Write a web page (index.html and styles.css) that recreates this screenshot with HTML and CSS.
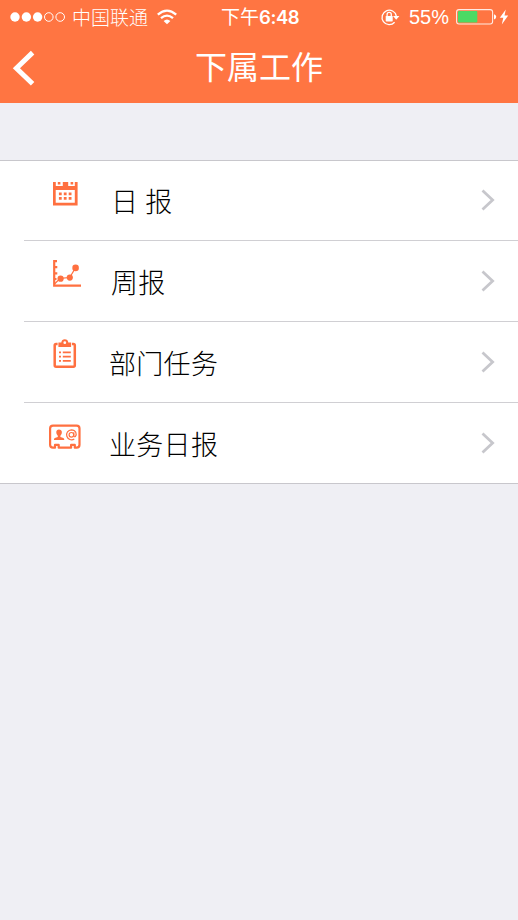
FILE: index.html
```html
<!DOCTYPE html>
<html lang="zh-CN">
<head>
<meta charset="utf-8">
<title>下属工作</title>
<link rel="stylesheet" href="styles.css">
</head>
<body>
<header class="header">
  <div class="status">
    <div class="carrier">
      <svg class="signal" width="56" height="12" viewBox="0 0 56 12"><g fill="#fff"><circle cx="5" cy="6" r="4.7"/><circle cx="16.4" cy="6" r="4.7"/><circle cx="27.6" cy="6" r="4.7"/></g><g fill="none" stroke="#fff" stroke-width="1"><circle cx="38.8" cy="6" r="4.3"/><circle cx="50.2" cy="6" r="4.3"/></g></svg>
      <span class="operator">中国联通</span>
      <svg class="wifi" width="20" height="16" viewBox="0 0 20 16"><g fill="none" stroke="#fff" stroke-width="2.3"><path d="M.8 5.6Q10-2.4 19.2 5.6"/><path d="M4 9.2Q10 4 16 9.2"/></g><path d="M6.6 12Q10 9 13.4 12L10 15.2Z" fill="#fff"/></svg>
    </div>
    <div class="time">下午<b>6:48</b></div>
    <div class="power">
      <svg class="lock" width="20" height="18" viewBox="0 0 20 18"><path d="M14.6 14.2A7.200 7.200 0 1 1 16.300 8" fill="none" stroke="#fff" stroke-width="1.3"/><path d="M13 8h6.400l-3.200 3.800z" fill="#fff"/><rect x="5.700" y="8" width="7" height="5.400" rx=".6" fill="#fff"/><path d="M7.100 8.200V6.400a2.100 2.100 0 0 1 4.200 0v1.800" fill="none" stroke="#fff" stroke-width="1.3"/></svg>
      <span class="percent">55%</span>
      <svg class="battery" width="54" height="18" viewBox="0 0 54 18"><rect x=".6" y="1.6" width="36" height="14.4" rx="2.4" fill="none" stroke="#fff" stroke-opacity=".85" stroke-width="1.1"/><rect x="2" y="3" width="19.3" height="11.6" rx="1" fill="#4cd964"/><path d="M38 6.2q2.2.5 2.2 2.6T38 11.4z" fill="#fff"/><path d="M49.8 1.400L43.800 9.700h3.500l-1.500 6.700 6.400-8.900h-3.700z" fill="#fff"/></svg>
    </div>
  </div>
  <nav class="navbar">
    <svg class="back" width="24" height="38" viewBox="0 0 24 38"><path d="M20.6 3.6L4.4 19.2 20.6 34.8" fill="none" stroke="#fff" stroke-width="5"/></svg>
    <h1 class="title">下属工作</h1>
  </nav>
</header>
<main class="list">
  <a class="row">
    <svg class="icon" viewBox="0 0 40 40"><path fill="#ff7040" fill-rule="evenodd" d="M8 8h2.800v4h7V8h5.400v4h6.600V8h2.800v23.600H8zM10.700 16v12.800h19.100V16z"/><path fill="#ff7040" d="M12.800 8h2.600v2.500h-2.600zM25.600 8h2.600v2.500h-2.600zM13.900 18.400h2.800v2.800h-2.800zm4.900 0h2.800v2.800h-2.800zm4.900 0h2.800v2.800h-2.800zM13.900 23h2.800v2.800h-2.800zm4.900 0h2.800v2.800h-2.800zm4.900 0h2.800v2.800h-2.800z"/></svg>
    <span class="label daily">日 报</span>
    <svg class="chevron" viewBox="0 0 16 24"><path d="M2.5 2.5L12.6 12 2.5 21.5"/></svg>
  </a>
  <a class="row">
    <svg class="icon" viewBox="0 0 40 40"><path fill="none" stroke="#ff7040" stroke-width="2.200" d="M12 7.200H9.200v24.400H36M9 13.200h3.300M9 19.400h3.300M9 25h2.500"/><path fill="none" stroke="#ff7040" stroke-width="1.2" d="M9.500 30l5.700-5.600 9.500-.9 5.800-9.600"/><g fill="#ff7040"><circle cx="15.600" cy="24.700" r="3.100"/><circle cx="24.800" cy="23.600" r="3.100"/><circle cx="30.600" cy="13.900" r="3.300"/></g></svg>
    <span class="label weekly">周报</span>
    <svg class="chevron" viewBox="0 0 16 24"><path d="M2.5 2.5L12.6 12 2.5 21.5"/></svg>
  </a>
  <a class="row">
    <svg class="icon" viewBox="0 0 40 40"><path fill="none" stroke="#ff7040" stroke-width="2.5" d="M12.6 8.900h-1.500q-1.400 0-1.400 1.400v20q0 1.400 1.400 1.400h17.300q1.400 0 1.400-1.400v-20q0-1.400-1.400-1.400h-1.500"/><path fill="#ff7040" fill-rule="evenodd" d="M13.400 11.900V7.600h2.900Q16.800 4.300 19.800 4.300t3.500 3.300h2.800v4.300zM18.400 7.700a1.400 1.400 0 1 0 2.800 0a1.400 1.400 0 1 0-2.8 0z"/><path fill="none" stroke="#ff7040" stroke-width="1.7" d="M14 17.300h2M17.800 17.300h8M14 21.600h2M17.800 21.600h8M14 25.900h2M17.800 25.900h8"/></svg>
    <span class="label">部门任务</span>
    <svg class="chevron" viewBox="0 0 16 24"><path d="M2.5 2.5L12.6 12 2.5 21.5"/></svg>
  </a>
  <a class="row">
    <svg class="icon" viewBox="0 0 40 40"><path fill="none" stroke="#ff7040" stroke-width="2.200" stroke-linejoin="round" d="M8 9.700h23.600q2.900 0 2.900 2.900v16.200q0 2.900-2.900 2.900h-1.800v-2.800h-3.700v2.800H13.700v-2.800H10v2.800H8q-2.900 0-2.900-2.900V12.600Q5.100 9.700 8 9.700z"/><path fill="#ff7040" d="M13.900 13.600c3.800 0 3.600 4.200 1.500 6.200v1.100l3 1q.9.300.9 2H8.900q0-1.700.9-2l3-1v-1.100c-2-2-2.300-6.200 1.100-6.200z"/><g fill="none" stroke="#ff7040" stroke-width="1.200"><circle cx="26.400" cy="18.800" r="2.300"/><path d="M28.800 16.200v3.400q.2 1.700 1.600.9c1.600-2.100.7-6.700-4-6.700a5 5 0 1 0 2.900 9.200"/></g></svg>
    <span class="label">业务日报</span>
    <svg class="chevron" viewBox="0 0 16 24"><path d="M2.5 2.5L12.6 12 2.5 21.5"/></svg>
  </a>
</main>
</body>
</html>
```
FILE: styles.css
```css
* { box-sizing: border-box; }
body {
  margin: 0;
  min-height: 920px;
  background: #efeff4;
  color: #000;
  font-family: "Noto Sans CJK SC", sans-serif;
  font-weight: 300;
}
svg { display: block; flex: none; }
.header { height: 103px; background: #ff7542; color: #fff; }
.status {
  display: grid;
  grid-template-columns: 221px 160px 1fr;
  height: 32px;
  font-size: 19px;
  line-height: 32px;
  white-space: nowrap;
}
.carrier, .power { display: flex; align-items: center; }
.signal { margin-left: 10px; }
.operator { margin-left: 6px; line-height: 30px; }
.wifi { margin-left: 9px; }
.time { font-size: 19px; font-weight: 400; line-height: 31px; }
.time b { font-family: Inter, "Liberation Sans", sans-serif; font-weight: 600; font-size: 18.5px; letter-spacing: -0.4px; }
.lock { margin-left: -1px; }
.percent { width: 47px; margin-left: 9px; font-family: "Liberation Sans", Arial, sans-serif; font-size: 20px; }
.navbar {
  display: grid;
  grid-template-columns: 60px 1fr 60px;
  align-items: center;
  height: 71px;
}
.back { margin-left: 12px; }
.title { margin: -6px 0 0; text-align: center; font-size: 32px; line-height: 60px; font-weight: 400; }
.list {
  margin-top: 57px;
  padding-left: 24px;
  background: #fff;
  border-top: 1px solid #c8c7cc;
  border-bottom: 1px solid #c8c7cc;
}
.row { display: flex; height: 81px; border-bottom: 1px solid #d0cfd3; }
.row:first-child { height: 80px; }
.row:last-child { border-bottom: 0; height: 80px; }
.icon { width: 40px; height: 40px; margin: 13px 0 0 21px; }
.label { flex: 1; margin-left: 24px; font-size: 27px; line-height: 81px; letter-spacing: 0.3px; white-space: pre; }
.daily, .weekly { margin-left: 26px; }
.daily { line-height: 79px; letter-spacing: 0.6px; }
.chevron { width: 16px; height: 24px; margin: 28px 22px 0 0; fill: none; stroke: #c7c7cc; stroke-width: 2.8; }
.row:first-child .chevron { margin-top: 27px; }
```
